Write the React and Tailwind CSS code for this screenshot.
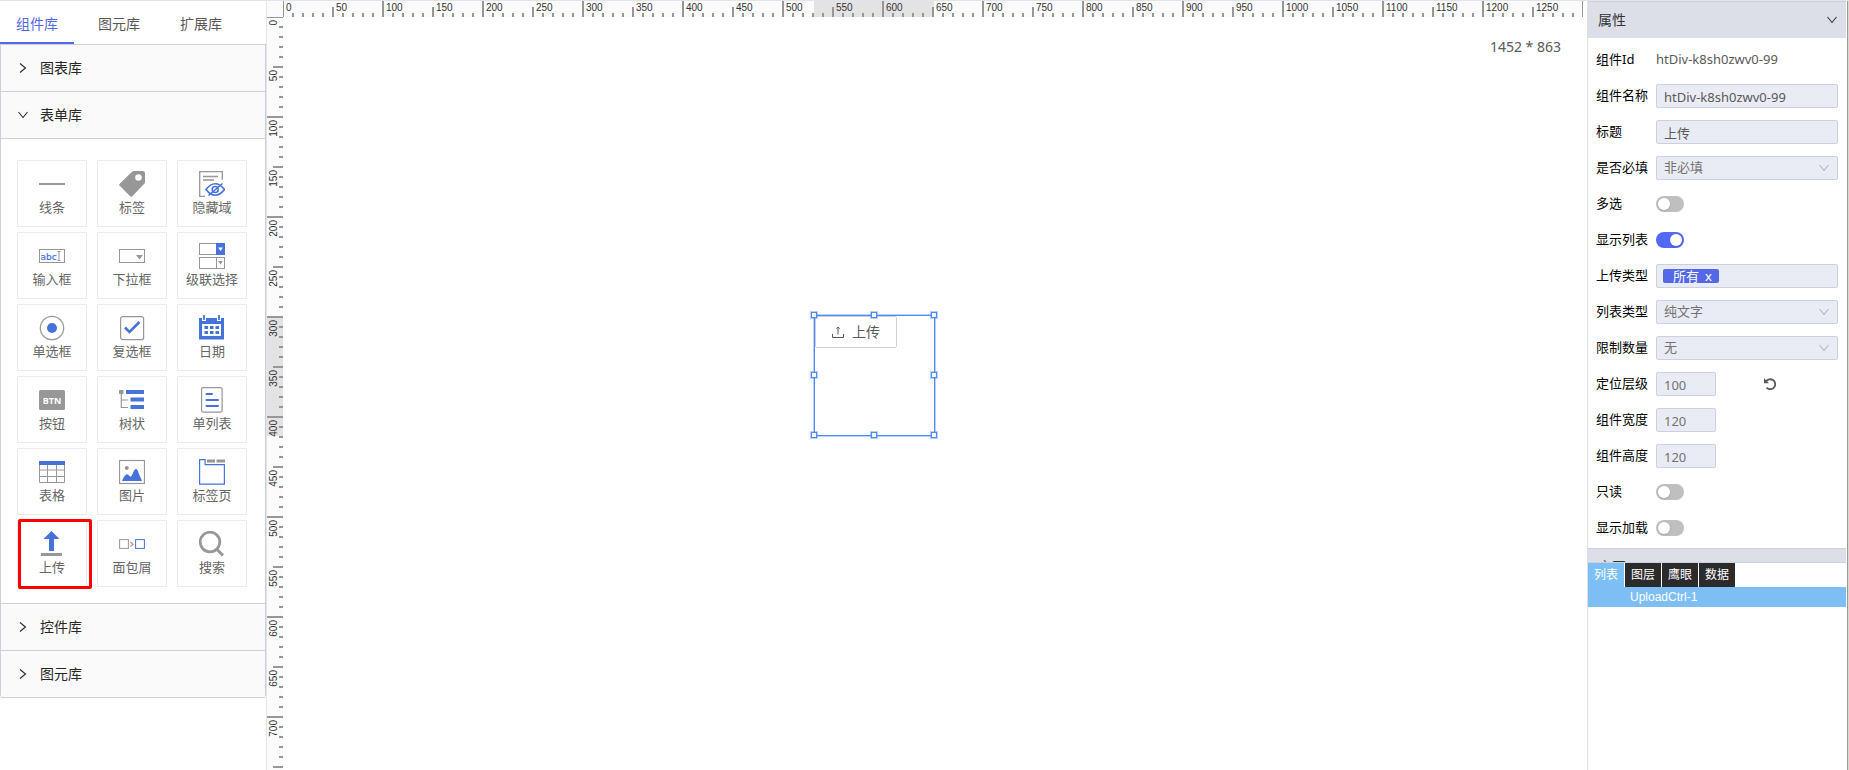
import React from 'react';

const G = '#979797';
const B = '#4672d9';

const icons = {
  line: <rect x="0" y="12" width="26" height="2" fill={G} />,
  tag: (
    <path fillRule="evenodd" fill={G} d="M15 0h8.500Q26 0 26 2.500V11q0 1-.7 1.700L13 25.500q-.8.700-1.600 0L.5 14.500q-.8-.8 0-1.600L13 .8Q14 0 15 0zM19.500 3.200a3.300 3.300 0 1 0 0 6.600 3.300 3.300 0 0 0 0-6.600z" />
  ),
  hidden: (
    <g fill="none">
      <path d="M6 25.500H.7V.7h22.600v8" stroke={G} strokeWidth="1.300" />
      <path d="M4 5.500h15M4 9h11" stroke={G} strokeWidth="1.300" />
      <path d="M7 18.500q9-11.500 18.500 0-9.500 11.500-18.500 0z" stroke={B} strokeWidth="1.700" />
      <circle cx="16.200" cy="18.500" r="3" stroke={B} strokeWidth="1.500" />
      <path d="M9.500 24.500 23.500 12.500" stroke={B} strokeWidth="1.500" />
    </g>
  ),
  input: (
    <g fill="none">
      <rect x=".5" y="6.500" width="25" height="13" stroke={G} />
      <text x="1.500" y="16.500" fontSize="9" fontFamily="DejaVu Sans" fill={B} stroke={B} strokeWidth=".2">abc</text>
      <path d="M18.500 8.500h3M18.500 17.500h3M20 8.500v9" stroke={G} />
    </g>
  ),
  dropdown: (
    <g>
      <rect x=".5" y="6.500" width="25" height="13" fill="none" stroke={G} />
      <path d="M17 12h7l-3.500 4.500z" fill={G} />
    </g>
  ),
  cascade: (
    <g>
      <rect x=".5" y=".5" width="17" height="11" fill="none" stroke={G} />
      <rect x="17" y="0" width="9" height="12" fill={B} />
      <path d="M19 4.500h5l-2.500 3.500z" fill="#fff" />
      <rect x=".5" y="14.500" width="25" height="11" fill="none" stroke={G} />
      <path d="M17.500 14.500v11" stroke={G} />
      <path d="M19 18h5l-2.500 3.500z" fill={G} />
    </g>
  ),
  radio: (
    <g>
      <circle cx="13" cy="13" r="11.700" fill="none" stroke={G} strokeWidth="1.200" />
      <circle cx="13" cy="13" r="5" fill={B} />
    </g>
  ),
  checkbox: (
    <g fill="none">
      <rect x="1.600" y="1.600" width="23" height="23" rx="2" stroke={G} strokeWidth="1.200" />
      <path d="m6 12.500 4.500 4.500L20.500 7" stroke={B} strokeWidth="2.600" />
    </g>
  ),
  date: (
    <g>
      <rect x="0" y="3" width="25" height="21.500" fill={B} />
      <rect x="3" y="9" width="19" height="12" fill="#fff" />
      <path d="M5 1v5M20 1v5" stroke="#fff" strokeWidth="4" />
      <path d="M5 0v5M20 0v5" stroke={B} strokeWidth="1.800" />
      <path d="M5.500 12.500H9M11 12.500h3.500M16.500 12.500H20M5.500 17.500H9M11 17.500h3.500M16.500 17.500H20" stroke={B} strokeWidth="3.200" />
    </g>
  ),
  button: (
    <g>
      <rect x="0" y="3" width="26" height="20" rx="1.500" fill={G} />
      <text x="13" y="16.700" textAnchor="middle" fontSize="9" fontWeight="700" fontFamily="Open Sans" fill="#fff">BTN</text>
    </g>
  ),
  tree: (
    <g>
      <rect x="0" y="3" width="4.500" height="4" fill={G} />
      <path d="M2.300 6v14.500H9M2.300 13H9" fill="none" stroke={G} strokeWidth="1.200" />
      <path d="M7 5h18M11.500 12.500H25M11.500 20H25" stroke={B} strokeWidth="4" />
    </g>
  ),
  list: (
    <g fill="none">
      <rect x="2.600" y=".6" width="20.500" height="24.500" rx="1.500" stroke={G} strokeWidth="1.200" />
      <path d="M7.500 7H13M7.500 13H19M7.500 19H19" stroke={B} strokeWidth="2" strokeLinecap="round" />
    </g>
  ),
  table: (
    <g fill="none">
      <path d="M.5 5v18.500h25V5M.5 11h25M.5 17.500h25M8.500 5v18.500M17.500 5v18.500" stroke={G} />
      <rect x="0" y="2" width="26" height="4" fill={B} />
    </g>
  ),
  image: (
    <g>
      <rect x=".5" y="1.500" width="25" height="23" fill="none" stroke={G} strokeWidth="1.200" />
      <circle cx="7.800" cy="9" r="2" fill={G} />
      <path d="M3 22q2-5 4-6.500 1.500-1 3.500 1.500 1.500 2 3-2 2-5 3.500-5t3 5l3 7z" fill={B} />
    </g>
  ),
  tabs: (
    <g fill="none">
      <path d="M.6.600h5.500v5h19.300v19.500H.6z" stroke={B} strokeWidth="1.200" />
      <path d="M8 2h8M17.500 2H26" stroke={G} strokeWidth="3" />
    </g>
  ),
  upload: (
    <g>
      <path d="M12.500 0 20.500 8H15v12h-5V8H4.500z" fill={B} />
      <rect x="2" y="22" width="21" height="3" fill={G} />
    </g>
  ),
  crumb: (
    <g fill="none">
      <rect x=".6" y="8.600" width="8.800" height="8.800" stroke={G} />
      <path d="m11.500 11 2.500 2.300-2.500 2.300" stroke={G} strokeWidth="1.200" />
      <rect x="16.600" y="8.600" width="8.800" height="8.800" stroke={B} />
    </g>
  ),
  search: (
    <g fill="none" stroke={G}>
      <circle cx="11" cy="11" r="9.800" strokeWidth="2.700" />
      <path d="m17.500 18 6.500 6.500" strokeWidth="3" />
    </g>
  ),
};

const tiles = [
  ['line', '线条'], ['tag', '标签'], ['hidden', '隐藏域'],
  ['input', '输入框'], ['dropdown', '下拉框'], ['cascade', '级联选择'],
  ['radio', '单选框'], ['checkbox', '复选框'], ['date', '日期'],
  ['button', '按钮'], ['tree', '树状'], ['list', '单列表'],
  ['table', '表格'], ['image', '图片'], ['tabs', '标签页'],
  ['upload', '上传'], ['crumb', '面包屑'], ['search', '搜索'],
];

function Chevron({ open, className = '' }) {
  return (
    <svg viewBox="0 0 10 10" className={`size-[10px] shrink-0 ${className}`} fill="none" stroke="currentColor" strokeWidth="1.100">
      <path d={open ? 'M.5 2 5 7.500 9.500 2' : 'M2 .5 7.500 5 2 9.500'} />
    </svg>
  );
}

function SectionHead({ title, open }) {
  return (
    <button type="button" aria-expanded={!!open} className="flex h-[47px] w-full items-center border-b border-[#ccd0de] bg-[#fafafa] pl-[17px] text-left text-sm text-[#262626]">
      <Chevron open={open} />
      <span className="ml-3">{title}</span>
    </button>
  );
}

function Sidebar() {
  return (
    <aside className="w-[267px] shrink-0 border-r border-[#e2e4ec]">
      <div role="tablist" className="flex h-[43px] items-stretch gap-2 text-sm text-[#595959]">
        <button type="button" role="tab" aria-selected="true" className="w-[74px] border-b-2 border-[#5468e7] pt-[5px] text-[#5468e7]">组件库</button>
        <button type="button" role="tab" aria-selected="false" className="w-[74px] pt-[3px]">图元库</button>
        <button type="button" role="tab" aria-selected="false" className="w-[74px] pt-[3px]">扩展库</button>
      </div>
      <div className="rounded-b-sm border-x border-t border-[#ccd0de]">
        <SectionHead title="图表库" />
        <SectionHead title="表单库" open />
        <div className="grid grid-cols-[repeat(3,70px)] gap-x-[10px] gap-y-[5px] border-b border-[#ccd0de] px-4 pt-[21px] pb-4">
          {tiles.map(([key, label]) => (
            <button
              key={key}
              type="button"
              className="relative flex h-[67px] flex-col items-center border border-[#ebebeb] pt-[10px] text-[13px] leading-5 text-[#666]"
            >
              <svg viewBox="0 0 26 26" className="size-[26px] shrink-0">{icons[key]}</svg>
              <span>{label}</span>
              {key === 'upload' && (
                <span className="absolute top-[-2px] left-0 h-[70px] w-[74px] rounded-xs border-3 border-[#f00]" />
              )}
            </button>
          ))}
        </div>
        <SectionHead title="控件库" />
        <SectionHead title="图元库" />
      </div>
    </aside>
  );
}

const cells = [1, 2, 3, 4, 5];

function Ruler({ vertical, count, children }) {
  return (
    <div className={`relative flex overflow-hidden bg-[#fbfbfb] font-['Liberation_Sans',sans-serif] text-[10px] leading-none text-[#333] ${vertical ? 'w-4 flex-col border-t border-[#979797]' : 'h-4 min-w-0 flex-1'}`}>
      {children}
      {Array.from({ length: count }, (_, i) => (
        <div key={i} className={`relative flex shrink-0 ${vertical ? 'h-[50px] w-4 flex-col items-end' : 'h-4 w-[50px] items-end'}`}>
          {cells.map((c) => {
            const len = c < 5 ? 4 : i % 2 ? 16 : 10;
            return (
              <span key={c} className={`flex shrink-0 ${vertical ? 'h-[10px] items-end' : 'w-[10px] justify-end'}`}>
                <i className="block bg-[#979797]" style={vertical ? { width: len, height: 2 } : { width: 2, height: len }} />
              </span>
            );
          })}
          <span className={vertical ? 'absolute top-[2px] left-[2px] rotate-180 [writing-mode:vertical-rl]' : 'absolute top-[2px] left-[2px]'}>{i * 50}</span>
        </div>
      ))}
    </div>
  );
}

const handles = [
  'left-[-4px] top-[-4px]', 'left-[56px] top-[-4px]', 'left-[116px] top-[-4px]',
  'left-[-4px] top-[56px]', 'left-[116px] top-[56px]',
  'left-[-4px] top-[116px]', 'left-[56px] top-[116px]', 'left-[116px] top-[116px]',
];

function Canvas() {
  return (
    <main className="flex min-w-0 flex-1 flex-col overflow-hidden">
      <div className="flex h-4 shrink-0">
        <div className="w-[17px] shrink-0 border-r border-[#979797] bg-[#fbfbfb]" />
        <Ruler count={26}>
          <div className="absolute top-0 left-[530px] h-4 w-[120px] bg-[#e3e3e3]" />
        </Ruler>
        <div className="w-1 shrink-0" />
      </div>
      <div className="flex min-h-0 flex-1">
        <Ruler vertical count={15}>
          <div className="absolute top-[298px] left-0 h-[120px] w-4 bg-[#e3e3e3]" />
        </Ruler>
        <div className="relative min-w-0 flex-1">
          <p className="absolute top-5 right-[26px] text-sm text-[#595959]">1452 * 863</p>
          <div className="absolute top-[298px] left-[531px] size-[121px] border border-[#4f8bf8] ring-1 ring-[#4f8bf8]/40">
            <button type="button" className="flex h-8 w-[82px] items-center justify-center gap-2 rounded-xs border border-[#ccd0de] bg-white text-sm text-[#595959]">
              <svg viewBox="0 0 12 12" className="size-3" fill="none" stroke="currentColor" strokeWidth="1">
                <path d="M.5 8v3.500h11V8M6 8.500V1M4.300 2.700 6 1l1.700 1.700" />
              </svg>
              上传
            </button>
            {handles.map((h) => (
              <span key={h} className={`absolute size-[6px] border border-[#4f8bf8] bg-white ring-1 ring-[#4f8bf8]/40 ${h}`} />
            ))}
          </div>
        </div>
      </div>
    </main>
  );
}

function Row({ label, id, children }) {
  return (
    <div className="flex h-9 items-center text-[13px]">
      <label htmlFor={id} className="w-[60px] shrink-0 whitespace-nowrap text-black">{label}</label>
      {children}
    </div>
  );
}

const box = 'h-6 rounded-xs border border-[#ccd0de] bg-[#e9ecf4] text-[13px] outline-none';

function TextBox({ id, value, className }) {
  return <input id={id} defaultValue={value} className={`${box} px-[7px] pt-px ${className}`} />;
}

function SelectBox({ id, value }) {
  return (
    <div className="relative min-w-0 flex-1">
      <select id={id} defaultValue={value} className={`${box} block w-full appearance-none px-[7px] text-[#737373]`}>
        <option>{value}</option>
      </select>
      <Chevron open className="pointer-events-none absolute top-[7px] right-[9px] text-[#b0b3bd]" />
    </div>
  );
}

function Toggle({ id, on }) {
  return (
    <span className="relative flex h-4 w-7">
      <input id={id} type="checkbox" role="switch" defaultChecked={on} className="peer h-4 w-7 appearance-none rounded-full bg-[#bfbfbf] checked:bg-[#5468f7]" />
      <span className="pointer-events-none absolute top-[2px] left-[2px] size-3 rounded-full bg-white shadow peer-checked:left-[14px]" />
    </span>
  );
}

function PanelHead({ title }) {
  return (
    <button type="button" className="flex h-[37px] w-full shrink-0 items-center justify-between border-t border-[#ccd0de] bg-[#dcdfe7] pr-[9px] pl-[10px] text-sm text-[#333]">
      {title}
      <Chevron open />
    </button>
  );
}

function Properties() {
  return (
    <aside className="flex w-[259px] shrink-0 flex-col border-l border-[#e2e2e6]">
      <div className="h-[562px] overflow-hidden border-b border-[#ccd0de]">
        <PanelHead title="属性" />
        <div className="pt-1 pr-2 pb-[2px] pl-2">
          <Row label="组件Id" id="cid">
            <output id="cid" className="text-[#595959]">htDiv-k8sh0zwv0-99</output>
          </Row>
          <Row label="组件名称" id="name"><TextBox id="name" value="htDiv-k8sh0zwv0-99" className="min-w-0 flex-1 text-[#595959]" /></Row>
          <Row label="标题" id="title"><TextBox id="title" value="上传" className="min-w-0 flex-1 text-[#595959]" /></Row>
          <Row label="是否必填" id="req"><SelectBox id="req" value="非必填" /></Row>
          <Row label="多选" id="multi"><Toggle id="multi" /></Row>
          <Row label="显示列表" id="showlist"><Toggle id="showlist" on /></Row>
          <Row label="上传类型" id="type">
            <div className={`${box} flex min-w-0 flex-1 items-center px-[6px]`}>
              <button id="type" type="button" className="flex h-[14px] items-center gap-[6px] rounded-xs bg-[#5468e7] pr-[7px] pl-[10px] leading-none text-white">
                所有<span>x</span>
              </button>
            </div>
          </Row>
          <Row label="列表类型" id="ltype"><SelectBox id="ltype" value="纯文字" /></Row>
          <Row label="限制数量" id="limit"><SelectBox id="limit" value="无" /></Row>
          <Row label="定位层级" id="z">
            <TextBox id="z" value="100" className="w-[60px] text-[#737373]" />
            <button type="button" aria-label="重置" className="ml-12 text-[#595959]">
              <svg viewBox="0 0 12 12" className="size-3" fill="none" stroke="currentColor" strokeWidth="1.800">
                <path d="M1.800 3.900A5 5 0 1 1 2.600 9.700" />
                <path d="M0 .3v5h5z" fill="currentColor" stroke="none" />
              </svg>
            </button>
          </Row>
          <Row label="组件宽度" id="w"><TextBox id="w" value="120" className="w-[60px] text-[#737373]" /></Row>
          <Row label="组件高度" id="h"><TextBox id="h" value="120" className="w-[60px] text-[#737373]" /></Row>
          <Row label="只读" id="ro"><Toggle id="ro" /></Row>
          <Row label="显示加载" id="load"><Toggle id="load" /></Row>
        </div>
        <PanelHead title="交互" />
      </div>
      <div role="tablist" className="flex h-6 shrink-0 gap-px text-xs text-white">
        {['列表', '图层', '鹰眼', '数据'].map((t, i) => (
          <button key={t} type="button" role="tab" aria-selected={i === 0} className={`w-9 ${i === 0 ? 'bg-[#7dbff5]' : 'bg-[#2b2b2b]'}`}>{t}</button>
        ))}
      </div>
      <div className="h-5 shrink-0 bg-[#7dbff5] pl-[42px] font-['Liberation_Sans',sans-serif] text-xs leading-5 text-white">UploadCtrl-1</div>
    </aside>
  );
}

export default function App() {
  return (
    <div className="flex h-screen overflow-hidden border-t border-[#e2e4ec] bg-white font-['Noto_Sans','Noto_Sans_CJK_SC',sans-serif]">
      <Sidebar />
      <Canvas />
      <Properties />
      <div className="ml-px w-[2px] shrink-0 border-l border-[#999] bg-[#d9d9d2]" />
    </div>
  );
}
